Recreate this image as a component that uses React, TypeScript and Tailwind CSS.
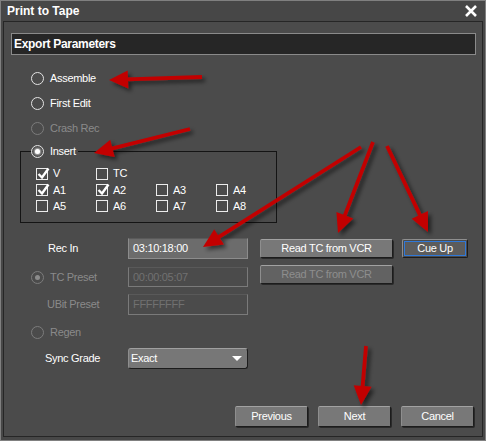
import React from "react";

function Radio({ checked = false, disabled = false }: { checked?: boolean; disabled?: boolean }) {
  return (
    <span
      className={`inline-flex shrink-0 w-[13px] h-[13px] rounded-full border-[1.5px] items-center justify-center ${
        disabled ? "border-[#7c7c7c]" : "border-[#e4e4e4]"
      }`}
    >
      {checked && (
        <span
          className={`w-[5px] h-[5px] rounded-full ${
            disabled ? "bg-[#8c8c8c]" : "bg-white shadow-[0_0_2px_1px_rgba(255,255,255,0.6)]"
          }`}
        />
      )}
    </span>
  );
}

function Check({ checked = false, label }: { checked?: boolean; label: string }) {
  return (
    <div className="flex items-center w-[60px]">
      <span className="relative inline-block shrink-0 w-[12px] h-[12px] border border-[#ececec]">
        {checked && (
          <svg
            width="13"
            height="13"
            viewBox="0 0 13 13"
            className="absolute left-[0px] top-[-2px] overflow-visible"
          >
            <path d="M1.5 7 L5 10.5 L11.5 1.5" stroke="white" strokeWidth="2.4" fill="none" />
          </svg>
        )}
      </span>
      <span className="ml-[5px] text-white">{label}</span>
    </div>
  );
}

function Btn({
  children,
  className = "",
  disabled = false,
}: {
  children: React.ReactNode;
  className?: string;
  disabled?: boolean;
}) {
  return (
    <div
      className={`flex items-center justify-center rounded-[2px] border border-t-[#a2a2a2] border-l-[#8e8e8e] border-r-[#1c1c1c] border-b-[#1c1c1c] shadow-[1px_1px_0_#2a2a2a] ${
        disabled ? "bg-[#626262] text-[#8e8e8e]" : "bg-[#787878] text-white"
      } ${className}`}
    >
      {children}
    </div>
  );
}

type A = [number, number, number, number];

function Arrow({ a }: { a: A }) {
  const [x1, y1, x2, y2] = a;
  const dx = x2 - x1;
  const dy = y2 - y1;
  const len = Math.sqrt(dx * dx + dy * dy);
  const ux = dx / len;
  const uy = dy / len;
  const hl = 19;
  const hw = 9;
  const bx = x2 - ux * hl;
  const by = y2 - uy * hl;
  const px = -uy;
  const py = ux;
  const pts = `${x2},${y2} ${bx + px * hw},${by + py * hw} ${bx - px * hw},${by - py * hw}`;
  return (
    <g>
      <line x1={x1} y1={y1} x2={bx + ux * 2} y2={by + uy * 2} stroke="#c20000" strokeWidth="3.8" strokeLinecap="butt" />
      <polygon points={pts} fill="#c20000" />
    </g>
  );
}

export default function App() {
  const arrows: A[] = [
    [201, 76, 108, 79],
    [189, 128, 93, 152],
    [360, 146, 202, 246],
    [372, 141, 337, 232],
    [386, 145, 427, 231],
    [365, 345, 360, 404],
  ];

  return (
    <div className="relative w-[486px] h-[441px] overflow-hidden bg-[#474747] border border-[#808080] px-[2px] pb-[3px] flex flex-col font-['Liberation_Sans',Arial,sans-serif] text-[11px] tracking-[-0.3px] leading-none select-none">
      {/* Title bar */}
      <div className="h-[20px] shrink-0 flex items-center justify-between pl-[4px] pr-[4px]">
        <span className="text-white font-bold text-[12px] tracking-[0px]">Print to Tape</span>
        <svg width="14" height="12" viewBox="0 0 14 12" className="mr-[1px]">
          <path d="M2 1 L12 11 M12 1 L2 11" stroke="white" strokeWidth="2.6" />
        </svg>
      </div>

      {/* Content panel */}
      <div className="flex-1 flex flex-col border border-[#262626] bg-[#4b4b4b]">
        <div className="mt-[11px] ml-[7px] mr-[6px] h-[22px] bg-[#262626] border border-[#8a8a8a] flex items-center pl-[2px]">
          <span className="text-white font-bold text-[12px]">Export Parameters</span>
        </div>

        <div className="mt-[11px] ml-[27px]">
          <div className="h-[25px] flex items-center">
            <Radio />
            <span className="ml-[6px] text-white">Assemble</span>
          </div>
          <div className="h-[25px] flex items-center">
            <Radio />
            <span className="ml-[6px] text-white">First Edit</span>
          </div>
          <div className="h-[25px] flex items-center">
            <Radio disabled />
            <span className="ml-[6px] text-[#8a8a8a]">Crash Rec</span>
          </div>
        </div>

        <fieldset className="mt-[2px] ml-[16px] w-[250px] border border-[#141414] pl-[10px] pb-[8px]">
          <legend className="h-[16px] flex items-center">
            <Radio checked />
            <span className="ml-[6px] pr-[2px] text-white">Insert</span>
          </legend>
          <div className="pt-[6px] ml-[5px]">
            <div className="h-[17px] flex items-center">
              <Check checked label="V" />
              <Check label="TC" />
            </div>
            <div className="h-[16px] flex items-center">
              <Check checked label="A1" />
              <Check checked label="A2" />
              <Check label="A3" />
              <Check label="A4" />
            </div>
            <div className="h-[16px] flex items-center">
              <Check label="A5" />
              <Check label="A6" />
              <Check label="A7" />
              <Check label="A8" />
            </div>
          </div>
        </fieldset>

        {/* Lower section */}
        <div className="mt-[15px]">
          {/* Rec In */}
          <div className="h-[21px] flex items-start">
            <div className="w-[124px] h-[21px] flex items-center">
              <span className="ml-[44px] text-white">Rec In</span>
            </div>
            <div className="w-[120px] h-[21px] bg-[#6c6c6c] border border-[#8c8c8c] border-t-[#5a5a5a] flex items-center pl-[4px] text-white">
              03:10:18:00
            </div>
            <Btn className="ml-[12px] mt-[1px] w-[133px] h-[19px]">Read TC from VCR</Btn>
            <div className="ml-[9px] mt-[1px] w-[66px] h-[19px] rounded-[2px] border border-[#8e8e8e] border-r-[#1c1c1c] border-b-[#1c1c1c] p-px">
              <div className="w-full h-full border border-[#2f78d8] bg-[#5c5c5c] flex items-center justify-center text-white">
                Cue Up
              </div>
            </div>
          </div>

          {/* TC Preset */}
          <div className="mt-[6px] h-[22px] flex items-start">
            <div className="w-[124px] h-[22px] flex items-center pt-[2px]">
              <span className="ml-[27px] flex items-center">
                <Radio checked disabled />
                <span className="ml-[6px] text-[#8a8a8a]">TC Preset</span>
              </span>
            </div>
            <div className="mt-[2px] w-[120px] h-[20px] border border-[#7a7a7a] border-t-[#595959] flex items-center pl-[4px] text-[#717171]">
              00:00:05:07
            </div>
            <Btn disabled className="ml-[12px] w-[133px] h-[19px]">
              Read TC from VCR
            </Btn>
          </div>

          {/* UBit Preset */}
          <div className="mt-[7px] h-[21px] flex items-center">
            <div className="w-[124px] h-[21px] flex items-center">
              <span className="ml-[43px] text-[#8a8a8a]">UBit Preset</span>
            </div>
            <div className="w-[120px] h-[21px] border border-[#7a7a7a] border-t-[#595959] flex items-center pl-[4px] text-[#717171]">
              FFFFFFFF
            </div>
          </div>

          {/* Regen */}
          <div className="mt-[7px] h-[20px] flex items-center">
            <span className="ml-[27px] flex items-center">
              <Radio disabled />
              <span className="ml-[6px] text-[#8a8a8a]">Regen</span>
            </span>
          </div>

          {/* Sync Grade */}
          <div className="mt-[6px] h-[21px] flex items-center">
            <div className="w-[124px] h-[21px] flex items-center">
              <span className="ml-[41px] text-white">Sync Grade</span>
            </div>
            <div className="w-[120px] h-[21px] rounded-[3px] bg-[#777777] border border-t-[#a0a0a0] border-l-[#8e8e8e] border-r-[#1c1c1c] border-b-[#1c1c1c] flex items-center justify-between pl-[2px] pr-[5px] text-white">
              <span>Exact</span>
              <svg width="10" height="6" viewBox="0 0 10 6">
                <polygon points="0,0 10,0 5,5" fill="white" />
              </svg>
            </div>
          </div>
        </div>

        <div className="flex-1" />

        <div className="flex justify-end gap-[10px] pr-[8px] pb-[9px]">
          <Btn className="w-[73px] h-[21px]">Previous</Btn>
          <Btn className="w-[73px] h-[21px]">Next</Btn>
          <Btn className="w-[73px] h-[21px]">Cancel</Btn>
        </div>
      </div>

      {/* Annotation arrows */}
      <svg
        className="absolute left-0 top-0 pointer-events-none"
        width="486"
        height="441"
        viewBox="0 0 486 441"
      >
        <defs>
          <filter id="sh" x="-20%" y="-20%" width="140%" height="140%">
            <feDropShadow dx="3" dy="3" stdDeviation="2" floodColor="#000" floodOpacity="0.55" />
          </filter>
        </defs>
        <g filter="url(#sh)">
          {arrows.map((a, i) => (
            <Arrow key={i} a={a} />
          ))}
        </g>
      </svg>
    </div>
  );
}
